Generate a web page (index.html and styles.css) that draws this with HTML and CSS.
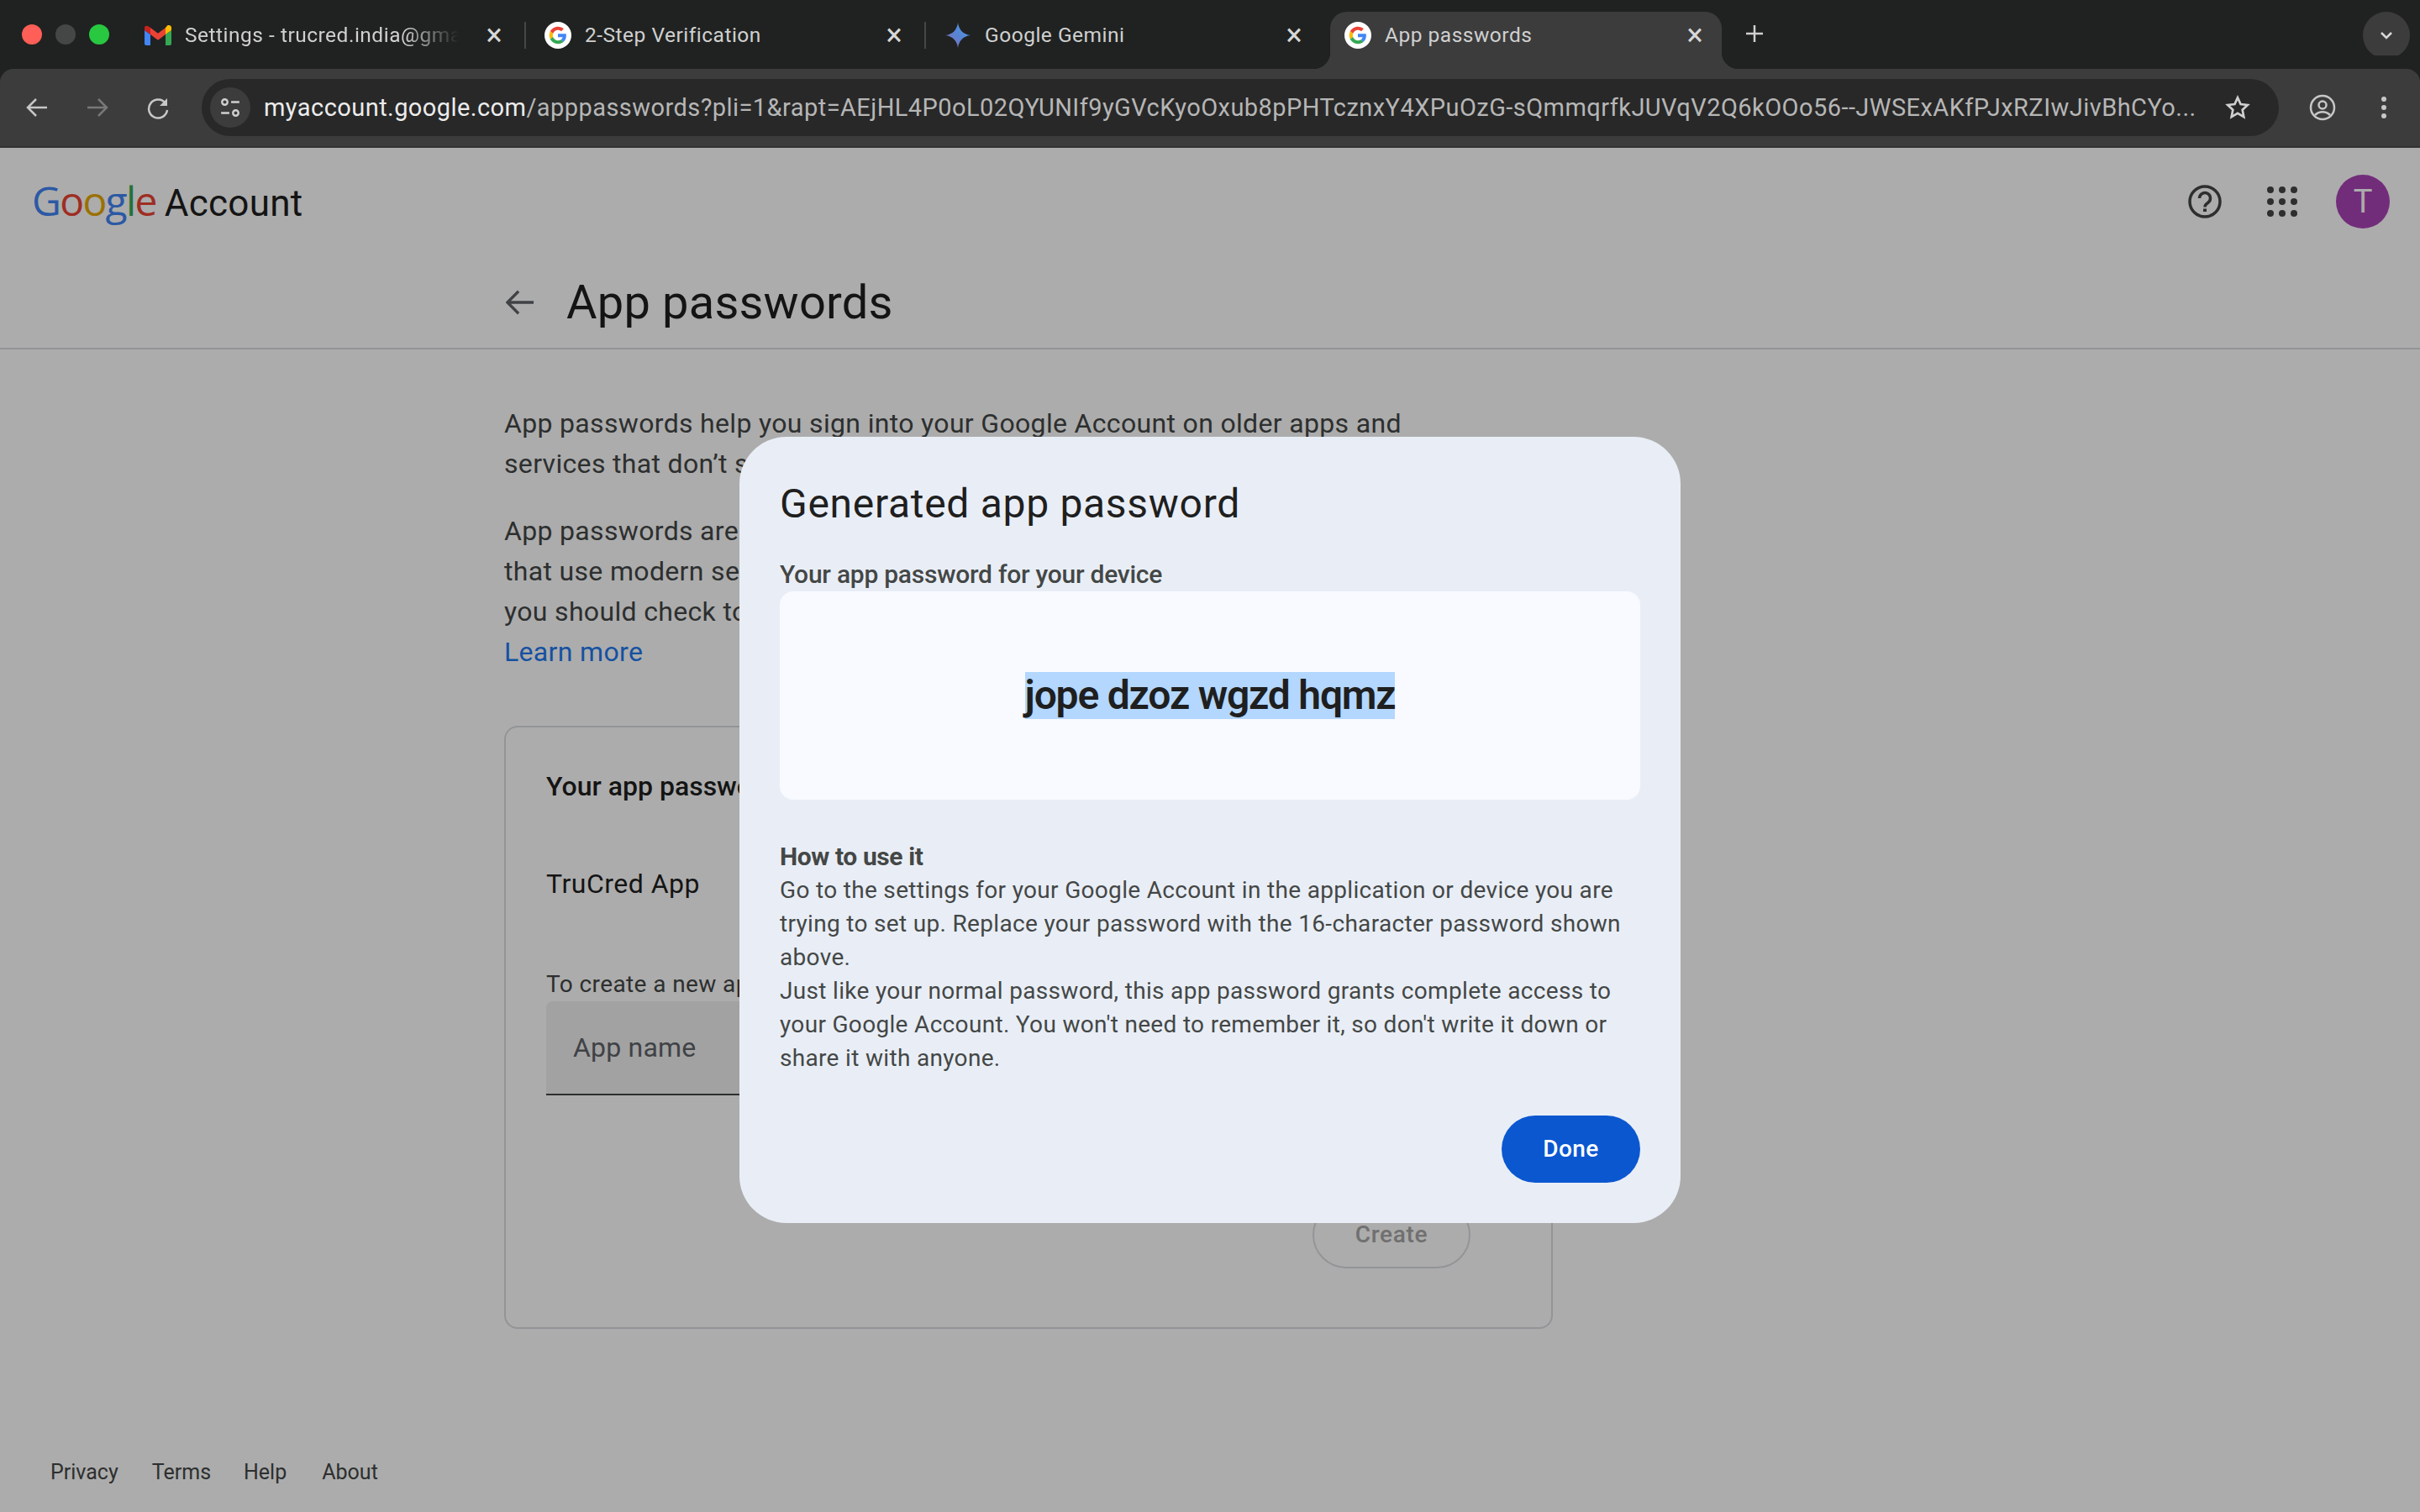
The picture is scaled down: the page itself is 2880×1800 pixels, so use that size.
FILE: index.html
```html
<!DOCTYPE html>
<html lang="en">
<head>
<meta charset="utf-8">
<title>App passwords</title>
<link rel="stylesheet" href="styles.css">
</head>
<body>
<svg class="defs" width="0" height="0" aria-hidden="true">
  <symbol id="g-mark" viewBox="0 0 48 48">
    <circle cx="24" cy="24" r="24" fill="#fff"/>
    <g transform="translate(8.5 8.5) scale(.645)">
      <path fill="#EA4335" d="M24 9.5c3.54 0 6.71 1.22 9.21 3.6l6.85-6.85C35.9 2.38 30.47 0 24 0 14.62 0 6.51 5.38 2.56 13.22l7.98 6.19C12.43 13.72 17.74 9.5 24 9.5z"/>
      <path fill="#4285F4" d="M46.98 24.55c0-1.57-.15-3.09-.38-4.55H24v9.02h12.94c-.58 2.96-2.26 5.48-4.78 7.18l7.73 6c4.51-4.18 7.09-10.36 7.09-17.65z"/>
      <path fill="#FBBC05" d="M10.53 28.59c-.48-1.45-.76-2.99-.76-4.59s.27-3.14.76-4.59l-7.98-6.19C.92 16.46 0 20.12 0 24c0 3.88.92 7.54 2.56 10.78l7.97-6.19z"/>
      <path fill="#34A853" d="M24 48c6.48 0 11.93-2.13 15.89-5.81l-7.73-6c-2.15 1.45-4.92 2.3-8.16 2.3-6.26 0-11.57-4.22-13.47-9.91l-7.98 6.19C6.51 42.62 14.62 48 24 48z"/>
    </g>
  </symbol>
</svg>

<header class="tabstrip">
  <div class="traffic">
    <span class="light light-red"></span>
    <span class="light light-idle"></span>
    <span class="light light-green"></span>
  </div>
  <div class="tabs">
    <div class="tab tab-first">
      <svg class="favicon" viewBox="0 0 32 24" aria-hidden="true">
        <path fill="#4285F4" d="M2 24h5V11L0 6v16c0 1.1.9 2 2 2z"/>
        <path fill="#34A853" d="M25 24h5c1.1 0 2-.9 2-2V6l-7 5z"/>
        <path fill="#FBBC04" d="M25 3v8l7-5V3c0-2.6-3-4-5-2.500z"/>
        <path fill="#EA4335" d="M7 11V3l9 6.700L25 3v8l-9 6.700z"/>
        <path fill="#C5221F" d="M0 3v3l7 5V3L5 1.500C3 0 0 .4 0 3z"/>
      </svg>
      <span class="tab-title tab-title-fade">Settings - trucred.india@gmail.com</span>
      <span class="tab-close">×</span>
    </div>
    <div class="tab">
      <svg class="favicon"><use href="#g-mark"/></svg>
      <span class="tab-title">2-Step Verification</span>
      <span class="tab-close">×</span>
    </div>
    <div class="tab tab-pre-active">
      <svg class="favicon" viewBox="0 0 32 32" aria-hidden="true">
        <defs><linearGradient id="gem" x1="0" y1="1" x2="1" y2="0"><stop offset="0" stop-color="#9168c0"/><stop offset=".5" stop-color="#5684d1"/><stop offset="1" stop-color="#4fa0f0"/></linearGradient></defs>
        <path fill="url(#gem)" d="M16 1c1 8 6 14 15 15-9 1-14 7-15 15-1-8-6-14-15-15 9-1 14-7 15-15z"/>
      </svg>
      <span class="tab-title">Google Gemini</span>
      <span class="tab-close">×</span>
    </div>
    <div class="tab tab-active">
      <svg class="favicon"><use href="#g-mark"/></svg>
      <span class="tab-title">App passwords</span>
      <span class="tab-close">×</span>
    </div>
    <svg class="new-tab" viewBox="0 0 22 22" aria-hidden="true"><path d="M11 1v20M1 11h20"/></svg>
  </div>
  <div class="tab-search">
    <svg viewBox="0 0 16 10" aria-hidden="true"><path d="M2 2l6 6 6-6"/></svg>
  </div>
</header>

<nav class="toolbar">
  <svg class="tool-icon" viewBox="0 0 28 28" aria-hidden="true"><path d="M26 14H4M13 4L3 14l10 10"/></svg>
  <svg class="tool-icon tool-icon-dim" viewBox="0 0 28 28" aria-hidden="true"><path d="M2 14h22M15 4l10 10-10 10"/></svg>
  <svg class="tool-icon" viewBox="0 0 28 28" aria-hidden="true"><path d="M23 9a11 11 0 1 0 2 8"/><path class="tool-fill" d="M25 3v9h-9z"/></svg>
  <div class="omnibox">
    <span class="site-info">
      <svg viewBox="0 0 24 24" aria-hidden="true"><circle cx="6" cy="6" r="3"/><path d="M13 6h9M2 18h9"/><circle cx="18" cy="18" r="3"/></svg>
    </span>
    <span class="url"><span class="url-host">myaccount.google.com</span>/apppasswords?pli=1&amp;rapt=AEjHL4P0oL02QYUNIf9yGVcKyoOxub8pPHTcznxY4XPuOzG-sQmmqrfkJUVqV2Q6kOOo56--JWSExAKfPJxRZIwJivBhCYo...</span>
    <svg class="star" viewBox="0 0 28 28" aria-hidden="true"><path d="M14 3l3.300 7.300 7.700.9-5.700 5.300 1.500 7.800L14 20.300 7.200 24.300l1.500-7.800L3 11.200l7.700-.9z"/></svg>
  </div>
  <svg class="profile" viewBox="0 0 32 32" aria-hidden="true"><circle cx="16" cy="16" r="14"/><circle cx="16" cy="13" r="4.500"/><path d="M7 25c5-5 13-5 18 0"/></svg>
  <svg class="kebab" viewBox="0 0 6 28" aria-hidden="true"><circle cx="3" cy="4" r="3"/><circle cx="3" cy="14" r="3"/><circle cx="3" cy="24" r="3"/></svg>
</nav>

<div class="page">
  <div class="account-bar">
    <div class="brand">
      <span class="logo"><span class="c-blue">G</span><span class="c-red">o</span><span class="c-yellow">o</span><span class="c-blue">g</span><span class="c-green">l</span><span class="c-red">e</span></span>
      <span class="brand-name">Account</span>
    </div>
    <div class="account-actions">
      <svg class="help" viewBox="0 0 40 40" aria-hidden="true"><circle cx="20" cy="20" r="18"/><path d="M13.500 16a6.500 6.500 0 1 1 10 5.500c-2 1.300-3.500 2.500-3.500 5"/><path class="help-dot" d="M18 28.500h4V32h-4z"/></svg>
      <div class="apps" aria-hidden="true">
        <i></i><i></i><i></i><i></i><i></i><i></i><i></i><i></i><i></i>
      </div>
      <div class="avatar">T</div>
    </div>
  </div>

  <div class="title-row">
    <svg class="back" viewBox="0 0 36 32" aria-hidden="true"><path d="M35 16H3M16 2L2 16l14 14"/></svg>
    <h1 class="page-title">App passwords</h1>
  </div>

  <main class="content">
    <p class="lead">App passwords help you sign into your Google Account on older apps and services that don’t support modern security standards.</p>
    <p class="lead">App passwords are less secure than using up-to-date apps and services that use modern security standards. Before you create an app password, you should check to see if your app needs this in order to sign in.<br><a class="link">Learn more</a></p>

    <section class="card">
      <h2 class="card-title">Your app passwords</h2>
      <div class="app-row">TruCred App</div>
      <label class="field-label">To create a new app specific password, type a name for it below...</label>
      <div class="field">App name</div>
      <div class="card-actions"><span class="btn-create">Create</span></div>
    </section>
  </main>

  <footer class="footer">
    <a>Privacy</a><a>Terms</a><a>Help</a><a>About</a>
  </footer>

  <div class="scrim">
    <div class="dialog">
      <h2 class="dialog-title">Generated app password</h2>
      <div class="dialog-label">Your app password for your device</div>
      <div class="password-box"><span class="password">jope dzoz wgzd hqmz</span></div>
      <div class="howto-title">How to use it</div>
      <p class="howto">Go to the settings for your Google Account in the application or device you are trying to set up. Replace your password with the 16-character password shown above.</p>
      <p class="howto">Just like your normal password, this app password grants complete access to your Google Account. You won't need to remember it, so don't write it down or share it with anyone.</p>
      <div class="dialog-actions"><span class="btn-done">Done</span></div>
    </div>
  </div>
</div>
</body>
</html>
```
FILE: styles.css
```css
* { box-sizing: border-box; }
html, body { margin: 0; height: 100%; }
body {
  width: 2880px;
  height: 1800px;
  overflow: hidden;
  display: flex;
  flex-direction: column;
  background: #fff;
  font-family: Roboto, "Liberation Sans", sans-serif;
  color: #1f1f1f;
}
.defs { position: absolute; }
h1, h2, p { margin: 0; font-weight: 400; }

/* tab strip */
.tabstrip {
  height: 82px;
  flex: none;
  display: flex;
  background: #202221;
  color: #c8c8c8;
}
.traffic { width: 151px; flex: none; display: flex; gap: 16px; padding: 29px 0 0 26px; }
.light { width: 24px; height: 24px; border-radius: 50%; }
.light-red { background: #ff5f57; }
.light-idle { background: #444746; }
.light-green { background: #28c840; }
.tabs { display: flex; flex: 1; align-items: flex-start; padding-top: 14px; }
.tab {
  width: 476px;
  height: 68px;
  display: flex;
  align-items: center;
  position: relative;
  padding: 0 26px 0 22px;
  font-size: 24.500px;
  border-top-left-radius: 20px;
  border-top-right-radius: 20px;
}
.tab::before {
  content: "";
  position: absolute;
  right: 0;
  top: 12px;
  width: 2px;
  height: 32px;
  background: #444746;
}
.tab-first { padding-left: 21px; width: 475px; }
.tab-pre-active::before { display: none; }
.favicon { width: 32px; height: 32px; flex: none; margin-top: -12px; }
.tab-first .favicon { width: 32px; height: 24px; margin-top: -12px; }
.tab-title {
  flex: 1;
  margin: -13px 12px 0 16px;
  white-space: nowrap;
  overflow: hidden;
  letter-spacing: .5px;
  color: #d0d0d0;
}
.tab-title-fade {
  margin-right: 30px;
  mask-image: linear-gradient(to right, #000 80%, transparent 100%);
}
.tab-close { font-size: 36px; line-height: 40px; width: 24px; text-align: center; margin-top: -12px; color: #d8d8d8; }
.tab-active {
  background: #3c3c3c;
  width: 466px;
  margin-left: 5px;
  padding-left: 17px;
  padding-right: 20px;
}
.tab-active::before {
  left: -20px;
  right: auto;
  top: auto;
  bottom: 0;
  width: 20px;
  height: 20px;
  background: radial-gradient(circle at 0 0, transparent 20px, #3c3c3c 20.500px);
}
.tab-active::after {
  content: "";
  position: absolute;
  right: -20px;
  bottom: 0;
  width: 20px;
  height: 20px;
  background: radial-gradient(circle at 100% 0, transparent 20px, #3c3c3c 20.500px);
}
.new-tab { width: 22px; height: 22px; margin: 15px 0 0 28px; fill: none; stroke: #d0d0d0; stroke-width: 2.500; }
.tab-search {
  width: 56px;
  height: 56px;
  margin: 14px 12px 0 0;
  border-radius: 28px;
  background: #3c3c3c;
  display: flex;
  align-items: center;
  justify-content: center;
}
.tab-search svg { width: 16px; height: 10px; fill: none; stroke: #d8d8d8; stroke-width: 2.500; }

/* toolbar */
.toolbar {
  height: 94px;
  flex: none;
  display: flex;
  align-items: center;
  background: #3c3c3c;
  border-bottom: 2px solid #333;
  border-top-left-radius: 16px;
  border-top-right-radius: 16px;
  padding: 0 0 0 30px;
  box-shadow: 0 -16px 0 0 #202221;
}
.tool-icon { width: 28px; height: 28px; flex: none; margin-right: 44px; fill: none; stroke: #c7c7c7; stroke-width: 2.500; }
.tool-icon:nth-of-type(3) { margin-right: 38px; }
.tool-icon-dim { stroke: #787878; }
.tool-fill { fill: #c7c7c7; stroke: none; }
.omnibox {
  width: 2472px;
  height: 68px;
  flex: none;
  display: flex;
  align-items: center;
  background: #282828;
  border-radius: 34px;
  padding: 0 34px 0 10px;
}
.site-info {
  width: 48px;
  height: 48px;
  flex: none;
  border-radius: 50%;
  background: #3c3c3c;
  display: flex;
  align-items: center;
  justify-content: center;
}
.site-info svg { width: 26px; height: 26px; fill: none; stroke: #d0d0d0; stroke-width: 2.200; }
.url {
  flex: 1;
  margin-left: 16px;
  font-size: 29px;
  letter-spacing: .44px;
  white-space: nowrap;
  overflow: hidden;
  color: #b6b6b6;
  font-variant-ligatures: none;
}
.url-host { color: #ececec; }
.star { width: 30px; height: 30px; flex: none; fill: none; stroke: #d0d0d0; stroke-width: 2.500; }
.profile { width: 32px; height: 32px; flex: none; margin-left: 36px; fill: none; stroke: #c7c7c7; stroke-width: 2.500; }
.kebab { width: 6px; height: 28px; flex: none; margin-left: 54px; fill: #c7c7c7; }

/* page */
.page { flex: 1; position: relative; display: flex; flex-direction: column; min-height: 0; }
.account-bar {
  height: 128px;
  flex: none;
  display: flex;
  align-items: center;
  justify-content: space-between;
  padding: 0 36px 0 38px;
}
.brand { display: flex; align-items: baseline; gap: 10px; margin-top: -3px; }
.logo { font-family: "Open Sans", sans-serif; font-size: 48px; font-weight: 500; letter-spacing: -1.700px; }
.c-blue { color: #4285f4; }
.c-red { color: #ea4335; }
.c-yellow { color: #e5a800; }
.c-green { color: #34a853; }
.brand-name { font-size: 44px; letter-spacing: .3px; color: #1f1f1f; }
.account-actions { display: flex; align-items: center; }
.help { width: 40px; height: 40px; fill: none; stroke: #444746; stroke-width: 3.500; margin-right: 54px; }
.help-dot { fill: #444746; stroke: none; }
.apps {
  width: 36px;
  height: 36px;
  display: grid;
  grid-template-columns: repeat(3, 8px);
  grid-template-rows: repeat(3, 8px);
  justify-content: space-between;
  align-content: space-between;
  margin-right: 46px;
}
.apps i { border-radius: 50%; background: #444746; }
.avatar {
  width: 64px;
  height: 64px;
  border-radius: 50%;
  background: #a944b6;
  color: #fff;
  font-size: 38px;
  display: flex;
  align-items: center;
  justify-content: center;
}
.title-row {
  height: 112px;
  flex: none;
  display: flex;
  align-items: center;
  padding: 0 0 0 602px;
  border-bottom: 2px solid #dadce0;
}
.back { width: 34px; height: 32px; flex: none; fill: none; stroke: #5f6368; stroke-width: 3.500; margin-top: 2px; }
.page-title { font-size: 56px; margin-left: 38px; margin-top: 2px; color: #1f1f1f; letter-spacing: .2px; }
.content { flex: none; width: 1248px; margin-left: 600px; padding-top: 64px; }
.lead { width: 1085px; font-size: 32px; line-height: 48px; letter-spacing: .33px; color: #444746; margin-bottom: 32px; }
.link { color: #1f78f0; }
.card {
  height: 718px;
  margin-top: 64px;
  border: 2px solid #dadce0;
  border-radius: 16px;
  padding: 48px;
  display: flex;
  flex-direction: column;
}
.card-title { font-size: 32px; line-height: 44px; font-weight: 500; color: #1f1f1f; }
.app-row { font-size: 32px; line-height: 44px; letter-spacing: .5px; margin-top: 72px; color: #1f1f1f; }
.field-label { font-size: 28px; line-height: 40px; margin-top: 78px; white-space: nowrap; color: #444746; letter-spacing: .4px; }
.field {
  height: 112px;
  flex: none;
  margin-right: 60px;
  padding: 0 32px;
  display: flex;
  align-items: center;
  font-size: 32px;
  letter-spacing: .2px;
  color: #5f6368;
  background: #f0f1f1;
  border-bottom: 2px solid #444746;
  border-top-left-radius: 8px;
  border-top-right-radius: 8px;
}
.card-actions { display: flex; justify-content: flex-end; margin-top: 126px; padding-right: 48px; }
.btn-create {
  width: 188px;
  height: 80px;
  display: flex;
  align-items: center;
  justify-content: center;
  border: 2px solid #dadce0;
  border-radius: 40px;
  font-size: 28px;
  font-weight: 500;
  letter-spacing: .7px;
  color: #a6a6a6;
  padding-bottom: 2px;
}
.footer {
  margin-top: auto;
  height: 65px;
  flex: none;
  display: flex;
  padding: 0 0 0 60px;
  font-size: 25px;
  line-height: 36px;
  color: #444746;
}
.footer a:nth-child(1) { margin-right: 40px; }
.footer a:nth-child(2) { margin-right: 39px; }
.footer a:nth-child(3) { margin-right: 42px; }

/* dialog */
.scrim {
  position: absolute;
  inset: 0;
  background: rgba(0, 0, 0, .325);
  display: flex;
  align-items: center;
  justify-content: center;
}
.dialog {
  width: 1120px;
  height: 936px;
  padding: 48px;
  border-radius: 56px;
  background: #e9eef6;
}
.dialog-title { font-size: 48px; line-height: 64px; letter-spacing: .7px; color: #1f1f1f; }
.dialog-label { font-size: 30px; line-height: 40px; font-weight: 500; letter-spacing: -.25px; margin-top: 32px; color: #444746; }
.password-box {
  height: 248px;
  border-radius: 16px;
  background: #f8faff;
  display: flex;
  align-items: center;
  justify-content: center;
}
.password { font-size: 48px; line-height: 56px; font-weight: 600; letter-spacing: -1.200px; color: #1f1f1f; background: #b3d7ff; }
.howto-title { font-size: 30px; line-height: 40px; font-weight: 700; letter-spacing: -.4px; margin-top: 48px; color: #444746; }
.howto { font-size: 28px; line-height: 40px; color: #444746; letter-spacing: .32px; }
.dialog-actions { display: flex; justify-content: flex-end; margin-top: 48px; }
.btn-done {
  width: 165px;
  height: 80px;
  display: flex;
  align-items: center;
  justify-content: center;
  border-radius: 40px;
  background: #0b57d0;
  color: #fff;
  font-size: 28px;
  font-weight: 500;
  letter-spacing: .4px;
  padding-bottom: 2px;
}
```
